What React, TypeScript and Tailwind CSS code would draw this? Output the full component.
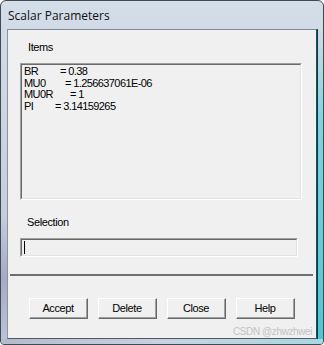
const rows = [
  { name: 'BR', w: 'w-[36px]', value: '= 0.38' },
  { name: 'MU0', w: 'w-[41px]', value: '= 1.256637061E-06' },
  { name: 'MU0R', w: 'w-[46px]', value: '= 1' },
  { name: 'PI', w: 'w-[31px]', value: '= 3.14159265' },
];

const buttons = ['Accept', 'Delete', 'Close', 'Help'];

function Sunken({ className, children }: { className: string; children?: React.ReactNode }) {
  return (
    <div className={`shrink-0 border border-t-[#a0a0a0] border-l-[#a0a0a0] border-b-white border-r-white ${className}`}>
      <div className="h-full border border-t-[#696969] border-l-[#696969] border-b-[#e3e3e3] border-r-[#e3e3e3]">
        {children}
      </div>
    </div>
  );
}

export default function App() {
  return (
    <div className="w-[324px] h-[345px] bg-white font-['Liberation_Sans',Arial,sans-serif] text-[11px] tracking-[-0.4px] text-black">
      <div className="w-full h-full flex flex-col rounded-t-[6px] rounded-b-[4px] border border-[#404a55] bg-[linear-gradient(180deg,#d4dee9_0%,#c3d0de_40%,#bccadb_100%)] overflow-hidden">
        <div className="h-[28px] shrink-0 flex items-center pl-[7px] pt-[1px] font-['Open_Sans','Liberation_Sans',sans-serif] text-[12px] tracking-normal text-[#111]">
          Scalar Parameters
        </div>
        <div className="flex flex-1 min-h-0">
          <div className="w-[6px] shrink-0 bg-[linear-gradient(180deg,#d2dbe5_0%,#c4cede_60%,#a7a9c8_80%,#b9c3d4_100%)]" />
          <div className="w-[310px] shrink-0 border border-t-[#7c8894] border-l-[#8a949e] border-r-[#1f4f58] border-b-[#4d5a66] bg-[#f0f0f0] flex flex-col">
            <div className="shrink-0 pl-[20px] pt-[11px] leading-[13px]">Items</div>
            <Sunken className="ml-[12px] mt-[9px] w-[282px] h-[137px]">
              <div className="pl-[2px] pt-[1px] leading-[11.7px] tracking-[-0.6px]">
                {rows.map((r) => (
                  <div key={r.name} className="flex whitespace-nowrap">
                    <span className={`${r.w} shrink-0`}>{r.name}</span>
                    <span>{r.value}</span>
                  </div>
                ))}
              </div>
            </Sunken>
            <div className="shrink-0 pl-[19px] mt-[16px] leading-[13px]">Selection</div>
            <Sunken className="ml-[12px] mt-[9px] w-[278px] h-[19px]">
              <div className="ml-[2px] mt-[1px] w-px h-[13px] bg-black" />
            </Sunken>
            <div className="shrink-0 ml-[2px] mt-[17px] w-[303px] h-[2px] bg-[#6d6d6d]" />
            <div className="shrink-0 flex gap-[10px] ml-[21px] mt-[22px]">
              {buttons.map((b) => (
                <div
                  key={b}
                  className="w-[59px] h-[21px] border border-t-white border-l-white border-b-[#696969] border-r-[#696969] bg-[#f0f0f0]"
                >
                  <div className="h-full flex items-center justify-center border-b border-r border-[#a0a0a0]">
                    {b}
                  </div>
                </div>
              ))}
            </div>
            <div className="shrink-0 ml-[225px] mt-[7px] text-[10px] leading-[11px] whitespace-nowrap tracking-[-0.4px] text-[#c3c3c3]">
              CSDN @zhwzhwei
            </div>
          </div>
          <div className="flex-1 bg-[linear-gradient(180deg,#cfdbe6_0%,#7fd3dc_30%,#4fc6d3_100%)] border-l border-[#113a44]" />
        </div>
        <div className="h-[5px] shrink-0 bg-[linear-gradient(90deg,#b4bccb_0%,#c8d2df_50%,#a8d8e0_100%)]" />
      </div>
    </div>
  );
}
